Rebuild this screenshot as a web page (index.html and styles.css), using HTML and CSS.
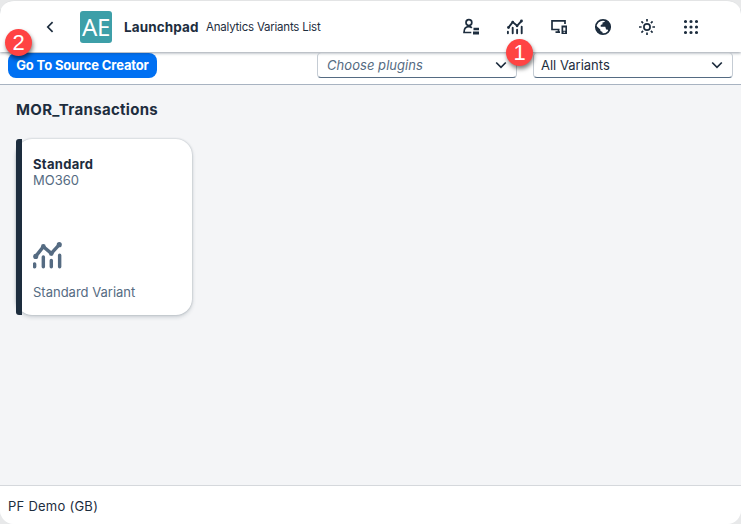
FILE: index.html
```html
<!DOCTYPE html>
<html lang="en">
<head>
<meta charset="utf-8">
<title>Analytics Variants List</title>
<link rel="stylesheet" href="styles.css">
</head>
<body>
<div class="app">
  <header class="shell">
    <svg class="back" viewBox="0 0 16 16"><path d="M10.600 3.200 5.800 8l4.800 4.800"/></svg>
    <div class="logo"><span>AE</span></div>
    <h1 class="title">Launchpad</h1>
    <span class="subtitle">Analytics Variants List</span>
    <nav class="actions">
      <svg viewBox="0 0 16 16"><g class="line"><circle cx="5.900" cy="3.600" r="2.900"/><path d="M8.300 13.500H1c0-3.800 1.800-5.800 4.800-5.800 1.200 0 2.300.4 3 1.200"/></g><path d="M10.500 8.800h5.500v2.400H10.500zM10 12.500h6v3h-6z"/></svg>
      <svg viewBox="0 0 16 16"><use href="#chart"/></svg>
      <svg viewBox="0 0 16 16"><path class="line" d="M14 5V1.800H1v8.700h7.500M4.500 13.200h4.500M7.500 10.500v2.700"/><path fill-rule="evenodd" d="M10.500 6.500H16V15h-5.500zM12.200 8.500v3.200h2.200V8.500zM12.500 12.800v.9h1.600v-.9z"/></svg>
      <svg viewBox="0 0 16 16"><circle class="line" cx="8" cy="8" r="7.200"/><path d="M1 6.500 5.300 10.500 5.500 12 7.500 13v2.400C3 15 .2 10.500 1 6.500zM10 1c0 1.800-.8 2.400-2.500 2.500v1.700L5.700 6v1.700h4.600l.8 2.700h1.400l1.300 1.900C17.200 8 15 2 10 1z"/></svg>
      <svg viewBox="0 0 16 16"><g class="line"><circle cx="8" cy="8" r="3.100"/><path d="M8 0v2.600M8 13.400V16M0 8h2.600M13.400 8H16M2.400 2.400l1.700 1.700M11.900 11.900l1.700 1.700M2.400 13.600l1.700-1.700M11.900 4.100l1.700-1.700"/></g></svg>
      <svg viewBox="0 0 16 16"><path class="dots" d="M2.500 2.500h0M8 2.500h0M13.500 2.500h0M2.500 8h0M8 8h0M13.500 8h0M2.500 13.500h0M8 13.500h0M13.500 13.500h0"/></svg>
    </nav>
    <span class="badge badge-one">1</span>
    <span class="badge badge-two">2</span>
  </header>

  <div class="toolbar">
    <button class="primary">Go To Source Creator</button>
    <div class="select plugins"><em>Choose plugins</em><svg viewBox="0 0 12 8"><path d="M1.200 1.500 6 6.300l4.800-4.800"/></svg></div>
    <div class="select variants"><span>All Variants</span><svg viewBox="0 0 12 8"><path d="M1.200 1.500 6 6.300l4.800-4.800"/></svg></div>
  </div>

  <main class="content">
    <h2 class="group">MOR_Transactions</h2>
    <article class="tile">
      <div class="accent"></div>
      <div class="tile-body">
        <h3>Standard</h3>
        <p class="code">MO360</p>
        <svg class="tile-icon" viewBox="0 0 16 16">
          <g id="chart">
            <path class="trend" d="M1.500 8.500 5.700 3.100 10.100 6.800 14.500 2"/>
            <path class="bars" d="M.9 12.700V14.200M5.700 8.800v5.400M10.100 10.700V14.200M14.700 7.800v6.400"/>
            <circle cx="1.500" cy="8.500" r="1.400"/><circle cx="5.700" cy="3" r="1.300"/><circle cx="10.100" cy="6.900" r="1.300"/><circle cx="14.500" cy="2" r="1.400"/>
          </g>
        </svg>
        <p class="caption">Standard Variant</p>
      </div>
    </article>
  </main>

  <footer class="footer">PF Demo (GB)</footer>
</div>
</body>
</html>
```
FILE: styles.css
```css
* { box-sizing: border-box; }
body { margin: 0; background: #e8e9ea; font-family: Inter, sans-serif; color: #1d2d3e; }
h1, h2, h3, p { margin: 0; }
.app { height: 524px; display: flex; flex-direction: column; border-radius: 14px; overflow: hidden; background: #f4f5f7; border-top: 1px solid #e3e4e5; }
.shell { position: relative; z-index: 1; flex: 0 0 51px; display: flex; align-items: center; padding: 0 42px; background: #fff; box-shadow: 0 1px 3px rgba(34, 53, 72, .48); white-space: nowrap; }
.back { width: 16px; height: 16px; fill: none; stroke: #1d2d3e; stroke-width: 1.7; }
.logo { width: 32px; height: 32px; margin-left: 22px; border-radius: 3px; background: #3d9fa8; color: #fff; display: flex; align-items: center; justify-content: center; font: 24px/32px "Noto Sans", sans-serif; letter-spacing: -.4px; }
.title { width: 74px; margin-left: 12px; font-size: 13.5px; font-weight: 700; letter-spacing: .1px; }
.subtitle { margin-left: 8px; font-size: 11.5px; letter-spacing: -.22px; }
.actions { display: flex; gap: 28px; margin-left: auto; }
.actions svg { width: 16px; height: 16px; fill: #1d2d3e; overflow: visible; }
.line { fill: none; stroke: #1d2d3e; stroke-width: 1.7; }
.dots { fill: none; stroke: #1d2d3e; stroke-width: 3.200; stroke-linecap: round; }
.actions use { stroke: #1d2d3e; }
.trend { fill: none; stroke-width: 1.900; }
.bars { fill: none; stroke-width: 1.900; stroke-linecap: round; }
#chart circle { stroke: none; }
.badge { position: absolute; width: 27px; height: 27px; border-radius: 50%; background: #ff4343; color: #fff; font: 22px/28px "Liberation Sans", sans-serif; text-align: center; box-shadow: 1px 3px 4px rgba(0, 0, 0, .5); }
.badge-one { left: 506px; top: 38px; }
.badge-two { left: 5px; top: 28px; }
.toolbar { flex: 0 0 33px; display: flex; align-items: flex-start; padding: 1px 8px 0; background: #fff; border-bottom: 1px solid #a8b3c1; }
.primary { width: 149px; height: 25px; margin: 0 auto 0 0; padding: 0 0 1px; border: 0; border-radius: 8px; background: #0070f2; color: #fff; font: 700 13px/24px Inter, sans-serif; letter-spacing: -.15px; white-space: nowrap; }
.select { height: 25px; width: 200px; padding: 0 9px 1px; display: flex; align-items: center; justify-content: space-between; border: 1px solid #c5ccd4; border-top: 0; border-bottom-color: #556b82; border-radius: 4px; font-size: 13px; }
.plugins { color: #556b82; letter-spacing: .05px; }
.variants { margin-left: 16px; padding-left: 7px; }
.select svg { width: 12px; height: 8px; fill: none; stroke: #1d2d3e; stroke-width: 1.700; }
.content { flex: 1; padding: 14px 16px; }
.group { font-size: 15px; line-height: 22px; letter-spacing: .3px; }
.tile { display: flex; width: 176px; height: 176px; margin-top: 18px; background: #fff; border-radius: 16px; box-shadow: 0 0 2px rgba(34, 53, 72, .3), 0 2px 4px rgba(34, 53, 72, .2); }
.accent { width: 6px; border-radius: 3px 0 0 3px; background: #1d2d3e; }
.tile-body { flex: 1; padding: 17px 11px; font-size: 13px; line-height: 16px; color: #556b82; }
.tile-body h3 { font-size: 13px; line-height: 16px; color: #1d2d3e; letter-spacing: .3px; }
.tile-icon { display: block; width: 29px; height: 29px; margin: 53px 0 14px; fill: #556b82; stroke: #556b82; }
.footer { flex: 0 0 39px; min-height: 0; padding-left: 8px; background: #fff; border-top: 1px solid #d5d8dc; font-size: 13px; line-height: 40px; letter-spacing: .25px; overflow: hidden; }
```
